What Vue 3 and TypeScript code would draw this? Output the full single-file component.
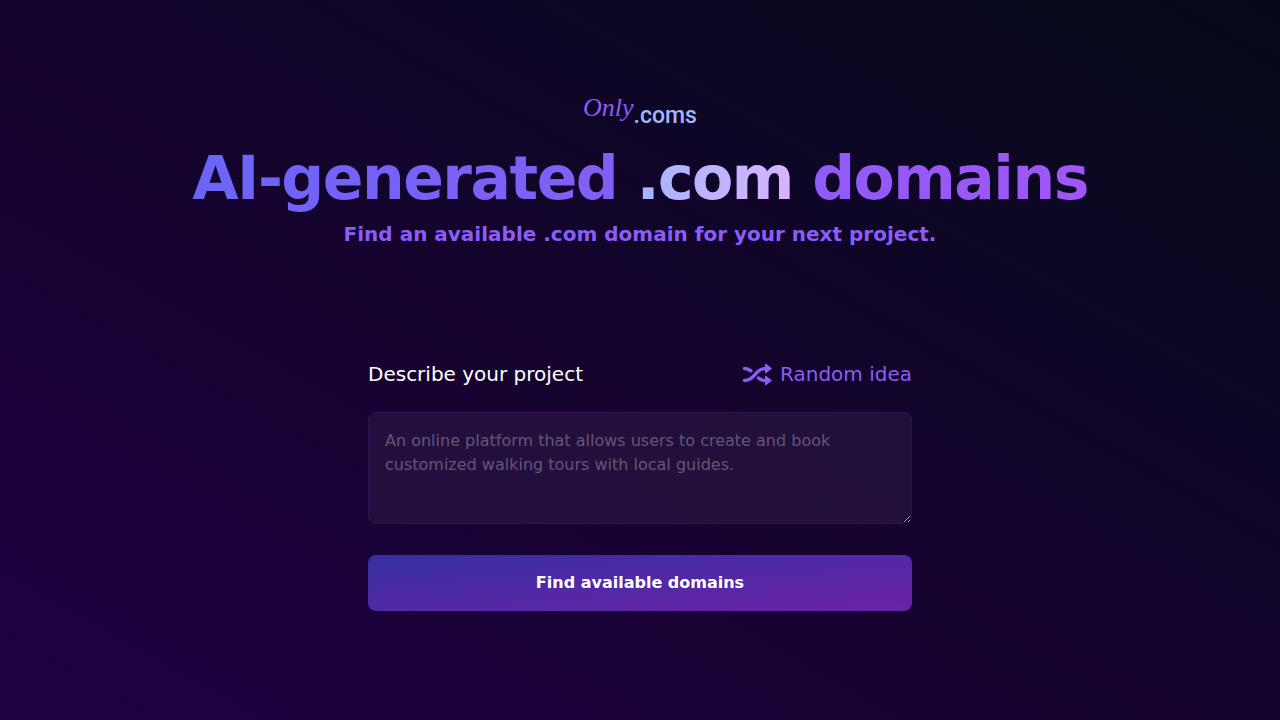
<script setup lang="ts">
import { ref } from 'vue'

const ideas: string[] = [
  'An online platform that allows users to create and book customized walking tours with local guides.',
]
const description = ref<string>('')

function pickRandomIdea(): void {
  description.value = ideas[Math.floor(Math.random() * ideas.length)]
}
</script>

<template>
  <main class="page">
    <header class="hero">
      <a class="logo" href="#" aria-label="Only.coms">
        <span class="logo-script">Only</span><span class="logo-suffix">.coms</span>
      </a>
      <h1 class="title">AI-generated <span class="title-accent">.com</span> domains</h1>
      <h2 class="subtitle">Find an available .com domain for your next project.</h2>
    </header>

    <form class="form" @submit.prevent>
      <div class="form-head">
        <label for="description">Describe your project</label>
        <button class="random" type="button" @click="pickRandomIdea">
          <svg class="random-icon" viewBox="0 0 32 24" aria-hidden="true">
            <g fill="none" stroke="currentColor" stroke-width="3.4" stroke-linecap="round">
              <path d="M4.500 6.500C7.500 6.500 9 7.200 11 8.800" />
              <path d="M4.500 18.500C15.500 18.500 14.500 6.500 26 6.500" />
              <path d="M18.500 16C20.500 17.800 23 18.500 26 18.500" />
            </g>
            <g fill="currentColor" stroke="currentColor" stroke-width="1" stroke-linejoin="round">
              <path d="M25.500 2L31.500 6.500L25.500 11Z" />
              <path d="M25.500 14L31.500 18.500L25.500 23Z" />
            </g>
          </svg>
          Random idea
        </button>
      </div>
      <textarea
        id="description"
        v-model="description"
        class="description"
        placeholder="An online platform that allows users to create and book customized walking tours with local guides."
      ></textarea>
      <button class="submit" type="submit">Find available domains</button>
    </form>
  </main>
</template>

<style>
body {
  margin: 0;
  background: #13042c;
}
</style>

<style scoped>
.page {
  box-sizing: border-box;
  min-height: 100vh;
  padding: 88px 24px 64px;
  display: flex;
  flex-direction: column;
  align-items: center;
  background: linear-gradient(to top right, #200043, #14042d, #050a1a);
  color: #fff;
  font-family: "DejaVu Sans", sans-serif;
}

.hero {
  display: flex;
  flex-direction: column;
  align-items: center;
  text-align: center;
}

.logo {
  display: flex;
  align-items: flex-start;
  height: 56px;
  text-decoration: none;
}

.logo-script {
  color: #8b5cf6;
  font: italic 26px/40px "Liberation Serif", serif;
}

.logo-suffix {
  padding-top: 8px;
  color: #a5b4fc;
  font: 500 23px/40px Roboto, sans-serif;
}

.title {
  margin: 0;
  padding: 0 4px;
  font-size: 60px;
  line-height: 68px;
  font-weight: 700;
  letter-spacing: -0.025em;
  color: transparent;
  background: linear-gradient(to right, #6a65f5, #a156f7);
  background-clip: text;
}

.title-accent {
  background: linear-gradient(to right, #a5b4fc, #d8b4fe);
  background-clip: text;
}

.subtitle {
  margin: 8px 0 0;
  font-size: 20px;
  line-height: 28px;
  font-weight: 700;
  color: #8b5cf6;
}

.form {
  width: 100%;
  max-width: 544px;
  margin-top: 112px;
  display: flex;
  flex-direction: column;
}

.form-head {
  display: flex;
  align-items: center;
  justify-content: space-between;
  font-size: 20px;
  line-height: 28px;
}

.random {
  display: flex;
  align-items: center;
  gap: 8px;
  padding: 0;
  border: 0;
  background: none;
  color: #8b5cf6;
  font: inherit;
  cursor: pointer;
}

.random-icon {
  width: 32px;
  height: 24px;
}

.description {
  box-sizing: border-box;
  width: 100%;
  height: 112px;
  margin: 24px 0 0;
  padding: 16px;
  border: 1px solid #2d144f;
  border-radius: 8px;
  background: rgba(58, 38, 84, 0.36);
  color: #fff;
  font: 16px/24px "DejaVu Sans", sans-serif;
  resize: vertical;
}

.description::placeholder {
  color: rgba(255, 255, 255, 0.3);
}

.submit {
  height: 56px;
  margin-top: 31px;
  border: 0;
  border-radius: 8px;
  background: linear-gradient(to bottom right, #3730a3, #6b21a8);
  color: #fff;
  font: 700 16px/24px "DejaVu Sans", sans-serif;
  cursor: pointer;
}
</style>
